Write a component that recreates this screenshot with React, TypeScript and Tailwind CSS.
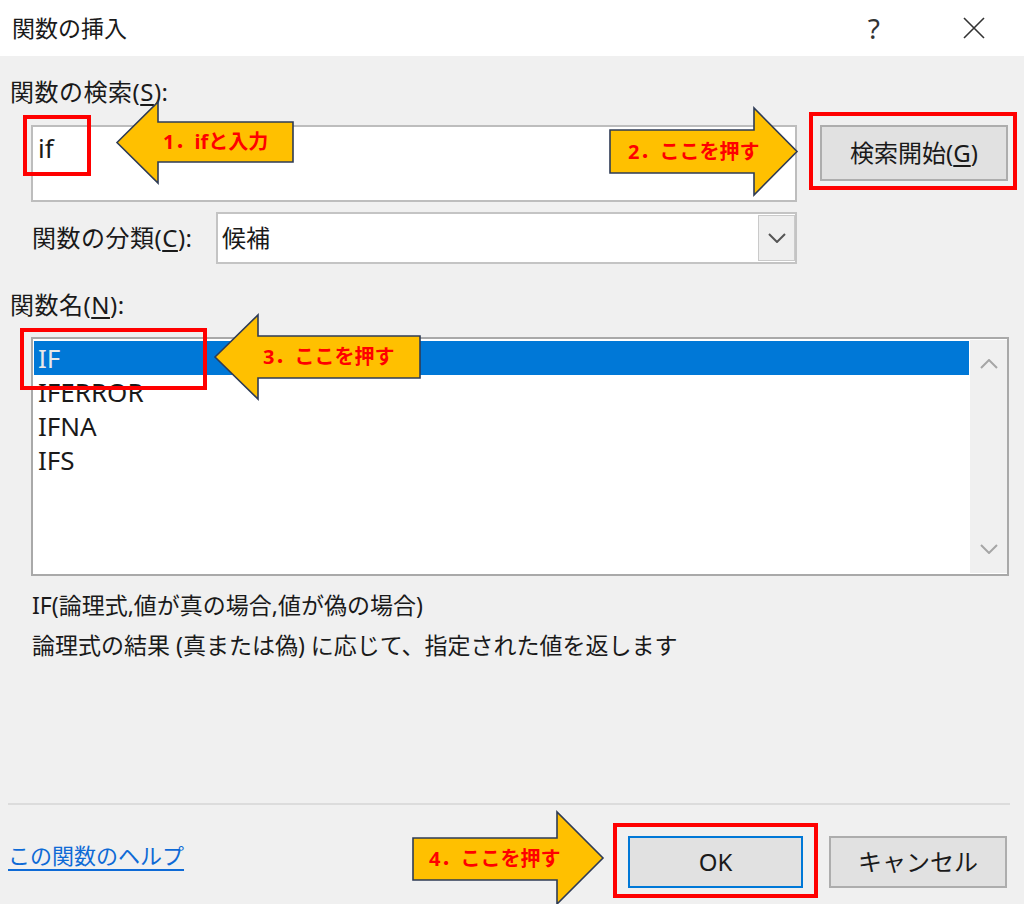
import React from "react";

const items = ["IF", "IFERROR", "IFNA", "IFS"];

function Mnemonic({ text, letter }: { text: string; letter: string }) {
  return (
    <>
      {text}(<span className="underline underline-offset-[3px]">{letter}</span>)
    </>
  );
}

function Chevron({ dir, className }: { dir: "up" | "down"; className?: string }) {
  return (
    <svg width="18" height="10" viewBox="0 0 18 10" className={className}>
      <polyline
        points={dir === "down" ? "1,1 9,9 17,1" : "1,9 9,1 17,9"}
        fill="none"
        stroke="currentColor"
        strokeWidth="2"
      />
    </svg>
  );
}

// yellow callout arrow, points left or right
function Callout({
  dir,
  w,
  h,
  head,
  bodyTop,
  bodyBottom,
  label,
  textLeft,
  className,
}: {
  dir: "left" | "right";
  w: number;
  h: number;
  head: number;
  bodyTop: number;
  bodyBottom: number;
  label: string;
  textLeft: number;
  className: string;
}) {
  const mid = h / 2;
  const pts =
    dir === "left"
      ? `0,${mid} ${head},0 ${head},${bodyTop} ${w},${bodyTop} ${w},${bodyBottom} ${head},${bodyBottom} ${head},${h}`
      : `0,${bodyTop} ${w - head},${bodyTop} ${w - head},0 ${w},${mid} ${w - head},${h} ${w - head},${bodyBottom} 0,${bodyBottom}`;
  return (
    <div className={`absolute ${className}`}>
      <svg width={w} height={h} className="absolute left-0 top-0 overflow-visible">
        <polygon points={pts} fill="#ffc000" stroke="#2e3b55" strokeWidth="1.6" strokeLinejoin="miter" />
      </svg>
      <div
        className="absolute flex items-center whitespace-nowrap text-[20px] font-bold text-[#ff0000]"
        style={{ left: textLeft, top: bodyTop, height: bodyBottom - bodyTop }}
      >
        {label}
      </div>
    </div>
  );
}

export default function App() {
  return (
    <div className="relative h-[904px] w-[1024px] overflow-hidden bg-[#f0f0f0] font-['Noto_Sans','Noto_Sans_CJK_JP',sans-serif] text-[#1a1a1a]">
      {/* title bar */}
      <div className="flex h-[56px] items-center bg-white">
        <span className="ml-[12px] text-[23px]">関数の挿入</span>
        <span className="ml-auto text-[28px] leading-none text-[#333]">?</span>
        <svg width="24" height="24" viewBox="0 0 24 24" className="ml-[82px] mr-[38px] text-[#333]">
          <path d="M2 2 L22 22 M22 2 L2 22" stroke="currentColor" strokeWidth="1.6" />
        </svg>
      </div>

      {/* body */}
      <div className="pt-[18px]">
        <div className="ml-[10px] h-[36px] text-[24px] leading-[36px] tracking-[0.5px]">
          <Mnemonic text="関数の検索" letter="S" />:
        </div>

        <div className="mt-[15px] flex items-start">
          <div className="ml-[31px] h-[77px] w-[766px] border-2 border-[#bdbdbd] bg-white pl-[5px] pt-[5px] text-[26px] leading-[32px]">
            if
          </div>
          <div className="ml-[23px] flex h-[56px] w-[188px] items-center justify-center border-2 border-[#adadad] bg-[#e1e1e1] text-[24px]">
            <Mnemonic text="検索開始" letter="G" />
          </div>
        </div>

        <div className="mt-[10px] flex h-[52px] items-center">
          <div className="ml-[32px] w-[184px] text-[24px] tracking-[0.5px]">
            <Mnemonic text="関数の分類" letter="C" />:
          </div>
          <div className="flex h-[52px] w-[581px] items-center border-2 border-[#c4c4c4] bg-white">
            <span className="pl-[4px] text-[24px]">候補</span>
            <div className="ml-auto flex h-[46px] w-[37px] items-center justify-center border border-[#cacaca] bg-[#efefef] text-[#555]">
              <Chevron dir="down" />
            </div>
          </div>
        </div>

        <div className="ml-[10px] mt-[23px] h-[36px] text-[24px] leading-[36px] tracking-[0.5px]">
          <Mnemonic text="関数名" letter="N" />:
        </div>

        <div className="ml-[31px] mt-[14px] flex h-[239px] w-[978px] border-2 border-[#a9a9a9] bg-white">
          <div className="ml-[1px] mt-[2px] w-[935px]">
            {items.map((name, i) => (
              <div
                key={name}
                className={`flex h-[34px] items-center pl-[4px] text-[26px] ${
                  i === 0 ? "bg-[#0078d7] text-[#e8e8e8]" : ""
                }`}
              >
                {name}
              </div>
            ))}
          </div>
          <div className="ml-[1px] mt-[1px] mb-[1px] flex w-[37px] flex-col items-center justify-between bg-[#f0f0f0] py-[19px] text-[#a6a6a6]">
            <Chevron dir="up" />
            <Chevron dir="down" />
          </div>
        </div>

        <div className="ml-[32px] mt-[11px] h-[36px] text-[23px] leading-[36px]">
          IF(論理式,値が真の場合,値が偽の場合)
        </div>
        <div className="ml-[32px] mt-[4px] h-[36px] text-[23px] leading-[36px]">
          論理式の結果 (真または偽) に応じて、指定された値を返します
        </div>

        <div className="ml-[8px] mt-[140px] h-[2px] w-[1002px] bg-[#dcdcdc]" />

        <div className="mt-[31px] flex items-start">
          <span className="ml-[8px] mt-[1px] h-[36px] text-[22px] leading-[36px] text-[#0e6ad6] underline underline-offset-[5px]">
            この関数のヘルプ
          </span>
          <div className="ml-auto flex h-[52px] w-[175px] items-center justify-center border-2 border-[#0078d7] bg-[#e1e1e1] text-[24px]">
            OK
          </div>
          <div className="ml-[26px] mr-[17px] flex h-[52px] w-[178px] items-center justify-center border-2 border-[#adadad] bg-[#e1e1e1] text-[24px]">
            キャンセル
          </div>
        </div>
      </div>

      {/* annotations */}
      <div className="absolute left-[23px] top-[115px] h-[61px] w-[68px] border-4 border-[#ff0000]" />
      <div className="absolute left-[809px] top-[112px] h-[78px] w-[208px] border-4 border-[#ff0000]" />
      <div className="absolute left-[20px] top-[328px] h-[62px] w-[187px] border-4 border-[#ff0000]" />
      <div className="absolute left-[613px] top-[823px] h-[75px] w-[205px] border-4 border-[#ff0000]" />

      <Callout
        dir="left"
        className="left-[117px] top-[102px]"
        w={176}
        h={81}
        head={41}
        bodyTop={20}
        bodyBottom={60}
        label="1．ifと入力"
        textLeft={46}
      />
      <Callout
        dir="right"
        className="left-[610px] top-[108px]"
        w={187}
        h={87}
        head={43}
        bodyTop={22}
        bodyBottom={65}
        label="2．ここを押す"
        textLeft={18}
      />
      <Callout
        dir="left"
        className="left-[215px] top-[315px]"
        w={205}
        h={84}
        head={43}
        bodyTop={21}
        bodyBottom={63}
        label="3．ここを押す"
        textLeft={48}
      />
      <Callout
        dir="right"
        className="left-[413px] top-[812px]"
        w={190}
        h={92}
        head={46}
        bodyTop={26}
        bodyBottom={68}
        label="4．ここを押す"
        textLeft={16}
      />
    </div>
  );
}
